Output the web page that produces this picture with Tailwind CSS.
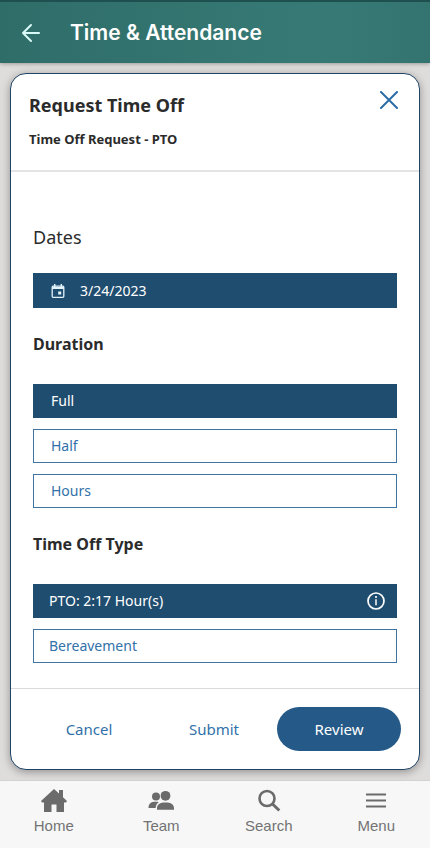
<!DOCTYPE html>
<html lang="en">
<head>
<meta charset="utf-8">
<meta name="viewport" content="width=device-width, initial-scale=1">
<title>Time &amp; Attendance</title>
<script src="https://cdn.jsdelivr.net/npm/@tailwindcss/browser@4"></script>
</head>
<body class="flex min-h-screen flex-col bg-[#dfdddc] font-['Noto_Sans',sans-serif] text-[#2b2b2b]">
  <header class="relative flex h-[63px] items-center gap-7 border-t-2 border-[#1f5050] bg-linear-to-r from-[#2f6d69] via-[#377a75] via-75% to-[#347470] px-5 text-white shadow-[0_1px_4px_rgba(0,0,0,0.3)]">
    <button type="button" aria-label="Back">
      <svg class="block size-[22px]" viewBox="0 0 22 22" fill="none" stroke="#d9fbf8" stroke-width="2" stroke-linecap="round" stroke-linejoin="round"><path d="M19 11H3M11 3L3 11l8 8"/></svg>
    </button>
    <h1 class="font-['Inter',sans-serif] text-[21px] leading-7 font-semibold">Time &amp; Attendance</h1>
  </header>

  <main class="flex flex-1 flex-col p-[10px]">
    <section aria-labelledby="dialog-title" class="flex flex-1 flex-col rounded-2xl border border-[#1f4468] bg-white shadow-[0_2px_8px_rgba(0,0,0,0.35)]">
      <div class="flex items-start justify-between border-b-2 border-[#e3e4e5] pt-[17px] pr-[21px] pb-[19px] pl-[18px]">
        <div>
          <h2 id="dialog-title" class="text-lg leading-7 font-bold">Request Time Off</h2>
          <p class="mt-2 text-[13px] leading-6 font-bold">Time Off Request - PTO</p>
        </div>
        <button type="button" aria-label="Close">
          <svg class="block size-[18px]" viewBox="0 0 18 18" fill="none" stroke="#2a6ca8" stroke-width="2" stroke-linecap="round"><path d="M1 1l16 16M17 1L1 17"/></svg>
        </button>
      </div>

      <div class="flex flex-1 flex-col px-[22px] pt-[51px] pb-6 text-sm">
        <h3 class="text-lg leading-7">Dates</h3>
        <button type="button" class="mt-[22px] flex h-[35px] items-center gap-[15px] bg-[#1f4d70] px-[18px] text-white">
          <svg class="size-[14px]" viewBox="0 0 14 14" fill="none" stroke="#e3f4fb"><rect x="1.2" y="2.2" width="11.6" height="11.100" rx="1" stroke-width="1.3"/><path d="M1.200 4h11.600" stroke-width="2"/><path d="M3.700 0v3M10.300 0v3" stroke-width="1.4"/><path d="M7.200 7.500h3v3h-3z" fill="#e3f4fb" stroke="none"/></svg>
          3/24/2023
        </button>

        <h3 id="duration" class="mt-[22px] text-base leading-7 font-bold">Duration</h3>
        <div role="group" aria-labelledby="duration" class="mt-[26px] flex flex-col gap-[11px]">
          <button type="button" aria-pressed="true" class="h-[34px] border border-[#1f4d70] bg-[#1f4d70] px-[17px] text-left text-white">Full</button>
          <button type="button" aria-pressed="false" class="h-[34px] border border-[#3f74a2] px-[17px] text-left text-[#3271a9]">Half</button>
          <button type="button" aria-pressed="false" class="h-[34px] border border-[#3f74a2] px-[17px] text-left text-[#3271a9]">Hours</button>
        </div>

        <h3 id="type" class="mt-[22px] text-base leading-7 font-bold">Time Off Type</h3>
        <div role="group" aria-labelledby="type" class="mt-[26px] flex flex-col gap-[11px]">
          <div class="flex h-[34px] items-center bg-[#1f4d70] pr-3 text-white">
            <button type="button" aria-pressed="true" class="h-full flex-1 px-4 text-left">PTO: 2:17 Hour(s)</button>
            <button type="button" aria-label="PTO details">
              <svg class="block size-[18px]" viewBox="0 0 18 18" fill="none" stroke="#fff"><circle cx="9" cy="9" r="8" stroke-width="1.700"/><path d="M9 7.300v6" stroke-width="1.500"/><circle cx="9" cy="5" r="1.1" fill="#fff" stroke="none"/></svg>
            </button>
          </div>
          <button type="button" aria-pressed="false" class="h-[34px] border border-[#3f74a2] px-[15px] text-left text-[#3271a9]">Bereavement</button>
        </div>
      </div>

      <div class="flex justify-between border-t border-[#d9dadb] py-[18px] pr-[18px] pl-4 text-[15px]">
        <button type="button" class="h-11 w-[124px] rounded-full text-[#3271a9]">Cancel</button>
        <button type="button" class="h-11 w-[124px] rounded-full text-[#3271a9]">Submit</button>
        <button type="button" class="h-11 w-[124px] rounded-full bg-[#255a88] text-white">Review</button>
      </div>
    </section>
  </main>

  <nav aria-label="Main" class="grid h-[68px] grid-cols-4 border-t border-[#d2d2d2] bg-[#f7f7f7] font-['Liberation_Sans',sans-serif] text-[15px] leading-5 text-[#737373]">
    <a href="#home" class="flex flex-col items-center pt-2">
      <svg class="h-6 w-[26px]" viewBox="0 0 26 24" fill="#6b6b6b"><path d="M13 0L0 12l1 1.500h2V23h7.500v-7.500h5V23H23V13.500h2l1-1.500-4-3.700V1h-4v3.600z"/></svg>
      <span class="mt-[3px]">Home</span>
    </a>
    <a href="#team" class="flex flex-col items-center pt-2">
      <svg class="h-6 w-[26px]" viewBox="0 0 26 24" fill="#6b6b6b"><circle cx="8" cy="7.500" r="4"/><circle cx="17.500" cy="6.800" r="4.900"/><path d="M.5 19c0-4.500 2.500-6.300 7-6.300 1.400 0 2.500.1 3.300.5-2 1.300-2.900 3-3.200 5.800zM9 20.800v-1.500c0-3.800 3-5.800 8.500-5.800s8.500 2 8.500 5.800v1.500z"/></svg>
      <span class="mt-[3px]">Team</span>
    </a>
    <a href="#search" class="flex flex-col items-center pt-2">
      <svg class="h-6 w-[26px]" viewBox="0 0 26 24" fill="none" stroke="#6b6b6b"><circle cx="11" cy="9.500" r="7.500" stroke-width="2.600"/><path d="M16 14.500l7.300 7" stroke-width="3"/></svg>
      <span class="mt-[3px]">Search</span>
    </a>
    <a href="#menu" class="flex flex-col items-center pt-2">
      <svg class="h-6 w-[26px]" viewBox="0 0 26 24" fill="none" stroke="#6b6b6b" stroke-width="2.200"><path d="M3 5.500h20M3 11.500h20M3 17.500h20"/></svg>
      <span class="mt-[3px]">Menu</span>
    </a>
  </nav>
</body>
</html>
